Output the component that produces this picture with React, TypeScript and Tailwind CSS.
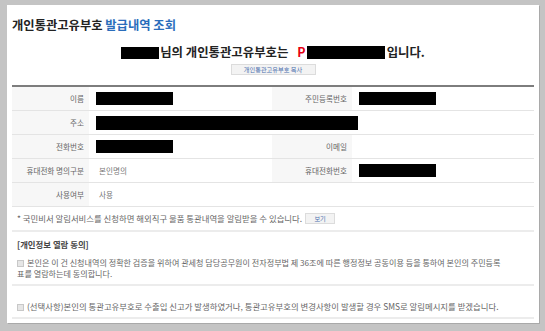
import React from 'react'

const Box = ({ w, h = 13 }: { w: number; h?: number }) => (
  <span className="inline-block bg-black align-middle" style={{ width: w, height: h }} />
)

const Check = () => (
  <span className="inline-block w-[7px] h-[7px] mr-[3px] align-[-1px] border border-[#c8c8c8] bg-[#e6e6e6]" />
)

function Label({ children }: { children: React.ReactNode }) {
  return (
    <div className="bg-[#f7f7f7] flex items-center justify-end pr-[5px] text-[7.6px] text-[#666] border-b border-[#e4e4e4]">
      {children}
    </div>
  )
}

function Value({ children, span }: { children?: React.ReactNode; span?: string }) {
  return (
    <div className={`flex items-center pl-[7px] text-[7.6px] text-[#777] border-b border-[#e4e4e4] ${span ?? ''}`}>
      {children}
    </div>
  )
}

export default function App() {
  return (
    <div className="w-[545px] h-[331px] bg-[#c4c4c4] pt-[5px] pl-[7px] font-['Noto_Sans_CJK_KR',sans-serif]">
      <div className="w-[532px] h-[318px] bg-white px-[5px] pt-[13px] shadow-[1px_1px_0_#a9a9a9]">
        <h1 className="text-[12.3px] leading-[15px] font-bold text-[#222]">
          개인통관고유부호 <span className="text-[#2a6dbb]">발급내역 조회</span>
        </h1>

        <div className="mt-[12px] flex items-center justify-center text-[12.4px] leading-[15px] font-bold text-[#222]">
          <Box w={38} h={12} />
          <span className="ml-[1px]">님의 개인통관고유부호는</span>
          <span className="ml-[9px] mr-[1px] text-[#e60012]">P</span>
          <Box w={78} h={13} />
          <span className="ml-[2px]">입니다.</span>
        </div>

        <div className="mt-[4px] flex justify-center">
          <button className="w-[85px] h-[11px] bg-[#f3f3f3] border border-[#dcdcdc] text-[6.2px] leading-[9px] text-[#4b6fae]">
            개인통관고유부호 복사
          </button>
        </div>

        <div className="mt-[10px] grid grid-cols-[77px_183px_80px_1fr] auto-rows-[24px] border-t-2 border-[#7d7d7d]">
          <Label>이름</Label>
          <Value><Box w={77} /></Value>
          <Label>주민등록번호</Label>
          <Value><Box w={77} /></Value>

          <Label>주소</Label>
          <Value span="col-span-3"><Box w={262} h={14} /></Value>

          <Label>전화번호</Label>
          <Value><Box w={77} /></Value>
          <Label>이메일</Label>
          <Value />

          <Label>휴대전화 명의구분</Label>
          <Value><span className="ml-[3px]">본인명의</span></Value>
          <Label>휴대전화번호</Label>
          <Value><Box w={77} /></Value>

          <Label>사용여부</Label>
          <Value span="col-span-3"><span className="ml-[3px]">사용</span></Value>
        </div>

        <div className="h-[25px] flex items-center pl-[5px] text-[8.4px] text-[#666] border-b-2 border-[#ececec]">
          * 국민비서 알림서비스를 신청하면 해외직구 물품 통관내역을 알림받을 수 있습니다.
          <button className="ml-[3px] w-[30px] h-[11px] bg-[#f3f3f3] border border-[#dcdcdc] text-[6.2px] leading-[9px] text-[#4b6fae]">
            보기
          </button>
        </div>

        <div className="h-[54px] pl-[5px] pt-[7px] border-b-2 border-[#ececec] text-[8.4px] text-[#666]">
          <div className="font-bold text-[#444] leading-[10px]">[개인정보 열람 동의]</div>
          <p className="mt-[8px] leading-[11px] text-[8.1px] whitespace-nowrap">
            <Check />
            본인은 이 건 신청내역의 정확한 검증을 위하여 관세청 담당공무원이 전자정부법 제 36조에 따른 행정정보 공동이용 등을 통하여 본인의 주민등록
            <br />
            표를 열람하는데 동의합니다.
          </p>
        </div>

        <div className="h-[33px] pl-[5px] flex items-center pt-[10px] border-b-2 border-[#ececec] text-[8.4px] text-[#666]">
          <p className="break-keep">
            <Check />
            (선택사항)본인의 통관고유부호로 수출입 신고가 발생하였거나, 통관고유부호의 변경사항이 발생할 경우 SMS로 알림메시지를 받겠습니다.
          </p>
        </div>
      </div>
    </div>
  )
}
